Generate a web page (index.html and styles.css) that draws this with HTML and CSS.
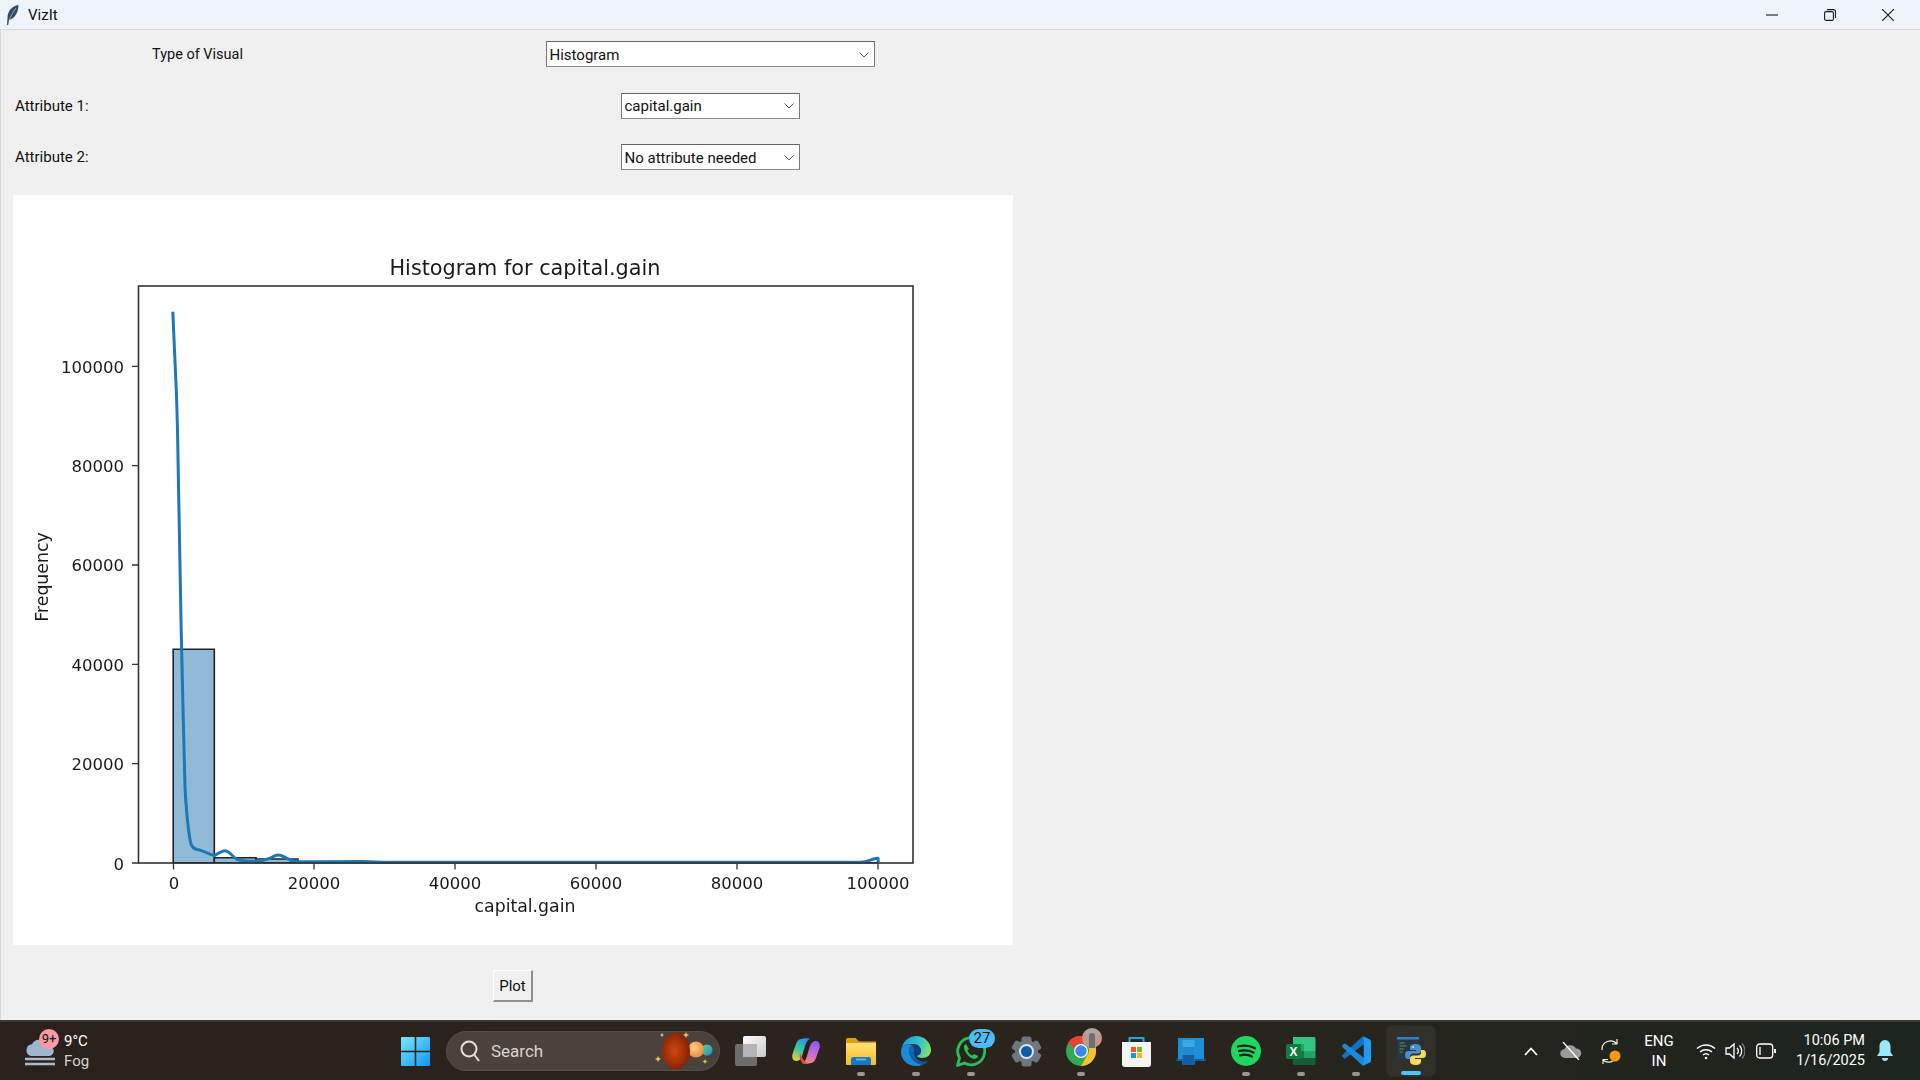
FILE: index.html
```html
<!DOCTYPE html>
<html lang="en">
<head>
    <meta charset="UTF-8">
    <title>VizIt</title>
    <link rel="stylesheet" href="styles.css">
</head>
<body>

<!-- Window title bar -->
<header class="titlebar">
    <svg class="app-feather" width="13" height="20" viewBox="0 0 13 20">
        <path d="M12.5 0C6 1 1.500 6 1.500 13L1 20h1.200l.8-5C9 13.500 12.500 7 12.500 0z" fill="#2f4a66"/>
        <path d="M10 3C7 7 5 11 3.200 15.500" stroke="#b9c9db" stroke-width=".7" fill="none"/>
    </svg>
    <span class="app-title">VizIt</span>
    <div class="window-controls">
        <button class="win-btn">
            <svg width="12" height="12" viewBox="0 0 12 12"><path d="M0 6h12" stroke="#1a1a1a" stroke-width="1.1"/></svg>
        </button>
        <button class="win-btn">
            <svg width="12" height="12" viewBox="0 0 12 12" fill="none" stroke="#1a1a1a" stroke-width="1.1"><rect x=".6" y="2.6" width="8.8" height="8.8" rx="1.5"/><path d="M3 .6h6.500a2 2 0 0 1 2 2V9"/></svg>
        </button>
        <button class="win-btn">
            <svg width="12" height="12" viewBox="0 0 12 12"><path d="M0 0l12 12M12 0L0 12" stroke="#1a1a1a" stroke-width="1.1"/></svg>
        </button>
    </div>
</header>

<main class="content">
    <div class="form-grid">
        <label class="label-center">Type of Visual</label>
        <div class="combo combo-wide">
            <span>Histogram</span>
            <svg width="10" height="6" viewBox="0 0 10 6"><path d="M.5.5L5 5 9.500.5" stroke="#555" fill="none"/></svg>
        </div>
        <label>Attribute 1:</label>
        <div class="combo">
            <span>capital.gain</span>
            <svg width="10" height="6" viewBox="0 0 10 6"><path d="M.5.5L5 5 9.500.5" stroke="#555" fill="none"/></svg>
        </div>
        <label>Attribute 2:</label>
        <div class="combo">
            <span>No attribute needed</span>
            <svg width="10" height="6" viewBox="0 0 10 6"><path d="M.5.5L5 5 9.500.5" stroke="#555" fill="none"/></svg>
        </div>
    </div>

    <div class="plot-area">
        <!-- viewBox follows screen pixels so the numbers can be read off the screenshot -->
        <svg class="chart" width="1000" height="750" viewBox="13 195 1000 750">
            <text class="chart-title" x="525" y="275" text-anchor="middle">Histogram for capital.gain</text>

            <path d="M173.2 862.7V649.3H214.3V862.7z" fill="#8fbbd9" stroke="#222" stroke-width="1.6"/>
            <path d="M214.3 862.7V857.7H256V862.7z" fill="#8fbbd9" stroke="#222" stroke-width="1.6"/>
            <path d="M256 862.7V859H298V862.7z" fill="#8fbbd9" stroke="#222" stroke-width="1.6"/>
            <path d="M298 862.7H878" stroke="#222" stroke-width="1.6"/>

            <path class="kde" d="M172.8 311.7L176.5 395 177.5 430 181 620 181.7 653 183.3 720 185 787C186 805 187 825 190.7 843C192 848 194 849 197 849.500C201 850 207 853 214.3 855.7C219 853 222 850.7 225 850.7C229 850.7 232 856 236.7 859.3C242 861 250 861.5 256.7 861C263 861 266 859.5 270 858.2C274 856 276 855 278.3 855C282 855 284 857 286.7 858.3C289 860 291 861.3 296 861.5L316.7 861.7 363 861.5 383 862.2H860C866 862 869 860.5 872 859.5C875 858.5 877 858 878 858.2L878.3 862"/>

            <rect class="spine" x="138.5" y="286" width="774.5" height="577"/>

            <g class="ticks">
                <path d="M173.5 863v6.500M314 863v6.500M455 863v6.500M596 863v6.500M737 863v6.500M878 863v6.500"/>
                <path d="M138.5 863h-6.500M138.5 763.7h-6.500M138.5 664.4h-6.500M138.5 565h-6.500M138.5 465.7h-6.500M138.5 366.4h-6.500"/>
            </g>

            <g class="tick-x" text-anchor="middle">
                <text x="174" y="889">0</text>
                <text x="314" y="889">20000</text>
                <text x="455" y="889">40000</text>
                <text x="596" y="889">60000</text>
                <text x="737" y="889">80000</text>
                <text x="878" y="889">100000</text>
            </g>
            <g class="tick-y" text-anchor="end">
                <text x="124" y="869.5">0</text>
                <text x="124" y="770">20000</text>
                <text x="124" y="670.7">40000</text>
                <text x="124" y="571.3">60000</text>
                <text x="124" y="472">80000</text>
                <text x="124" y="372.7">100000</text>
            </g>
            <text class="axis-label" x="525" y="912" text-anchor="middle">capital.gain</text>
            <text class="axis-label" text-anchor="middle" transform="translate(48 577) rotate(-90)">Frequency</text>
        </svg>
        <button class="plot-btn">Plot</button>
    </div>
</main>

<!-- Windows taskbar -->
<footer class="taskbar">
    <div class="weather">
        <svg width="32" height="32" viewBox="0 0 32 32">
            <circle cx="19" cy="11" r="8" fill="#7d93ad"/>
            <path d="M6 21a6 6 0 0 1 1-11.800A8 8 0 0 1 22 11a5 5 0 0 1 3 10z" fill="#9db5d0"/>
            <path d="M0 24h30M0 29h30" stroke="#aebccb" stroke-width="2.5"/>
        </svg>
        <span class="weather-badge">9+</span>
        <div class="weather-text">
            <span class="temp">9°C</span>
            <span>Fog</span>
        </div>
    </div>

    <div class="task-center">
        <div class="app">
            <svg width="29" height="29" viewBox="0 0 29 29">
                <defs><linearGradient id="winGrad" x1="0" y1="0" x2="1" y2="1"><stop offset="0" stop-color="#7be6fb"/><stop offset="1" stop-color="#0f95f5"/></linearGradient></defs>
                <path d="M0 1a1 1 0 0 1 1-1h12.700v13.700H0zM15.300 0H28a1 1 0 0 1 1 1v12.700H15.300zM0 15.300h13.700V29H1a1 1 0 0 1-1-1zM15.300 15.300H29V28a1 1 0 0 1-1 1H15.300z" fill="url(#winGrad)"/>
            </svg>
        </div>

        <div class="search-box">
            <svg width="20" height="22" viewBox="0 0 20 22" fill="none" stroke="#e4e1de" stroke-width="2"><circle cx="9" cy="9" r="7.5"/><path d="M14.500 15l4.500 6"/></svg>
            <span>Search</span>
            <svg class="planets" width="66" height="44" viewBox="0 0 66 44">
                <defs>
                    <radialGradient id="redPlanet" cx=".45" cy=".5" r=".6"><stop offset="0" stop-color="#d2460f"/><stop offset="1" stop-color="#7a1e08"/></radialGradient>
                    <radialGradient id="orangePlanet" cx=".4" cy=".4" r=".7"><stop offset="0" stop-color="#ffd08a"/><stop offset="1" stop-color="#e4852f"/></radialGradient>
                    <linearGradient id="tealPlanet" x1="0" y1="0" x2="1" y2="1"><stop offset="0" stop-color="#5fd08c"/><stop offset="1" stop-color="#1f8fc9"/></linearGradient>
                </defs>
                <circle cx="57" cy="21" r="5.5" fill="url(#tealPlanet)"/>
                <circle cx="46" cy="20.500" r="8" fill="url(#orangePlanet)"/>
                <ellipse cx="26" cy="22" rx="14" ry="18.5" fill="url(#redPlanet)"/>
                <path d="M8 27l1 2 2 1-2 1-1 2-1-2-2-1 2-1zM36 3l1 2 2 1-2 1-1 2-1-2-2-1 2-1zM55 30l.8 1.700 1.700.8-1.700.8-.8 1.700-.8-1.700-1.700-.8 1.700-.8zM12 4l.7 1.300 1.300.7-1.300.7-.7 1.300-.7-1.300-1.300-.7 1.300-.7z" fill="#f2c14a"/>
            </svg>
        </div>

        <!-- task view -->
        <div class="app">
            <svg width="32" height="30" viewBox="0 0 32 30">
                <defs><linearGradient id="tvFront" x1="0" y1="0" x2="1" y2="1"><stop offset="0" stop-color="#fff"/><stop offset="1" stop-color="#c9c9c9"/></linearGradient></defs>
                <rect x="0" y="8" width="22" height="22" rx="2" fill="#6d6d6d"/>
                <rect x="8" y="0" width="23" height="21" rx="2" fill="url(#tvFront)"/>
                <rect x="8" y="8" width="14" height="13" fill="#b5b5b5"/>
            </svg>
        </div>

        <!-- copilot -->
        <div class="app">
            <svg width="28" height="26" viewBox="0 0 28 26">
                <defs>
                    <linearGradient id="copA" x1=".7" y1="0" x2=".2" y2="1"><stop offset="0" stop-color="#2a8df0"/><stop offset=".5" stop-color="#37c7a0"/><stop offset="1" stop-color="#e6d13a"/></linearGradient>
                    <linearGradient id="copB" x1=".6" y1="0" x2=".4" y2="1"><stop offset="0" stop-color="#8c5be8"/><stop offset=".55" stop-color="#c96ad8"/><stop offset="1" stop-color="#f58a6e"/></linearGradient>
                </defs>
                <path d="M9 1C11 0 17 0 18 1 15 2 14 5 13 8L10 18C9 21 7 23 4 23 1 23-.5 20 .5 16L4 6C5 3 6.500 1.500 9 1z" fill="url(#copA)"/>
                <path d="M19 25C17 26 11 26 10 25 13 24 14 21 15 18L18 8C19 5 21 3 24 3 27 3 28.500 6 27.500 10L24 20C23 23 21.500 24.500 19 25z" fill="url(#copB)"/>
                <path d="M8 15C10 20 12 24 16 25L11 25.500C9 24 7 20 8 15z" fill="#e8483a"/>
                <path d="M15.500 6h2.500L13 20h-2.500z" fill="#2a1d1f"/>
            </svg>
        </div>

        <!-- file explorer -->
        <div class="app running">
            <svg width="30" height="27" viewBox="0 0 30 27">
                <defs><linearGradient id="folder" x1="0" y1="0" x2="0" y2="1"><stop offset="0" stop-color="#ffe27a"/><stop offset="1" stop-color="#fcb919"/></linearGradient></defs>
                <path d="M0 1.500A1.500 1.500 0 0 1 1.500 0h8L13 3.500h17V10H0z" fill="#e0a10f"/>
                <rect x="0" y="5" width="30" height="22" rx="1" fill="url(#folder)"/>
                <path d="M5 27v-6a2 2 0 0 1 2-2h16a2 2 0 0 1 2 2v6z" fill="#1677c9"/>
                <path d="M10 21.500h10" stroke="#58b4ee" stroke-width="2"/>
            </svg>
        </div>

        <!-- edge -->
        <div class="app running">
            <svg width="30" height="30" viewBox="0 0 30 30">
                <defs>
                    <linearGradient id="edgeTop" x1="0" y1=".3" x2="1" y2=".6"><stop offset="0" stop-color="#1c9be0"/><stop offset=".55" stop-color="#35c1c8"/><stop offset="1" stop-color="#86e06a"/></linearGradient>
                    <linearGradient id="edgeLow" x1="0" y1="0" x2="1" y2="1"><stop offset="0" stop-color="#0f6cbd"/><stop offset="1" stop-color="#0c4f9e"/></linearGradient>
                </defs>
                <path d="M1 11C3 4 9 0 15 0C24 0 30 7 30 14C30 19 26 22 21 22C18 22 16 21 15.500 19.500C18 19.500 20 17.500 20 15C20 11 17 8 12 8C7 8 3 9 1 11z" fill="url(#edgeTop)"/>
                <path d="M1 11C3 9 7 8.500 11 9C8 11 7.500 14 8.500 17.500C10 23 15 28 22 28.700C20 29.600 17.500 30 15 30C7 30 0 24 0 16C0 14 .5 12.500 1 11z" fill="#1b8ad8"/>
                <path d="M11 9C8 11 7.500 14 8.500 17.500C10 23 15 28 22 28.700C24 28 26 26.500 27 25C25 26 22 26 19.500 25C15 23.500 13 20 13.500 16.500C14 13 13 11 11 9z" fill="url(#edgeLow)"/>
                <path d="M11 8.500C16 8 20 11 20 15C20 17.500 18 19.500 15.500 19.500C13.500 19 13 17.500 13.500 16C14 13 13 11 11 8.500z" fill="#0b3f80"/>
            </svg>
        </div>

        <!-- whatsapp -->
        <div class="app running">
            <svg width="30" height="31" viewBox="0 0 30 31">
                <path d="M1.500 29.500l2-7.500A13.500 13.500 0 1 1 8.500 27z" fill="none" stroke="#22c15e" stroke-width="2.8" stroke-linejoin="round"/>
                <path d="M10 8c-2 1-3 3-1 7s5 7 9 8c2 0 4-1 4-3l-4-2-2 1.500c-2-1-4-3-4.500-5L13 13z" fill="#22c15e"/>
            </svg>
            <span class="count-badge">27</span>
        </div>

        <!-- settings -->
        <div class="app">
            <svg width="31" height="31" viewBox="-15.500 -15.500 31 31">
                <g fill="#6d7782">
                    <circle r="11.500"/>
                    <rect x="-5" y="-15" width="10" height="8" rx="2.500"/>
                    <rect x="-5" y="-15" width="10" height="8" rx="2.500" transform="rotate(60)"/>
                    <rect x="-5" y="-15" width="10" height="8" rx="2.500" transform="rotate(120)"/>
                    <rect x="-5" y="-15" width="10" height="8" rx="2.500" transform="rotate(180)"/>
                    <rect x="-5" y="-15" width="10" height="8" rx="2.500" transform="rotate(240)"/>
                    <rect x="-5" y="-15" width="10" height="8" rx="2.500" transform="rotate(300)"/>
                </g>
                <circle r="7.500" fill="#dfe4e9"/>
                <circle r="5.500" fill="#0f5ba6"/>
            </svg>
        </div>

        <!-- chrome -->
        <div class="app running">
            <svg width="30" height="30" viewBox="0 0 30 30">
                <circle cx="15" cy="15" r="15" fill="#35a853"/>
                <path d="M15 0a15 15 0 0 1 13 7.500H15a7.500 7.500 0 0 0-7 5L2 6.500A15 15 0 0 1 15 0z" fill="#e94335"/>
                <path d="M28 7.500a15 15 0 0 1-13 22.500l6.500-11.300A7.500 7.500 0 0 0 21 9z" fill="#fbc02d"/>
                <circle cx="15" cy="15" r="7" fill="#fff"/>
                <circle cx="15" cy="15" r="5.700" fill="#3f85f2"/>
            </svg>
            <svg class="chrome-avatar" width="20" height="20" viewBox="0 0 20 20">
                <circle cx="10" cy="10" r="10" fill="#c4958e"/>
                <path d="M2 5a10 10 0 0 1 16 0l-4 4H6z" fill="#b0a49c"/>
                <path d="M7 20V8a3 3 0 0 1 6 0v12z" fill="#6f6f78"/>
            </svg>
        </div>

        <!-- store -->
        <div class="app">
            <svg width="29" height="31" viewBox="0 0 29 31">
                <path d="M7.500 6V2h14v4" fill="none" stroke="#19a7e0" stroke-width="2"/>
                <path d="M0 6h29v22a3 3 0 0 1-3 3H3a3 3 0 0 1-3-3z" fill="#f4f4f4"/>
                <rect x="9" y="11" width="5" height="5" fill="#f0562c"/>
                <rect x="15" y="11" width="5" height="5" fill="#7cb82f"/>
                <rect x="9" y="17" width="5" height="5" fill="#0f9be3"/>
                <rect x="15" y="17" width="5" height="5" fill="#fbb80c"/>
            </svg>
        </div>

        <!-- phone link -->
        <div class="app">
            <svg width="30" height="27" viewBox="0 0 30 27">
                <rect x="2" y="0" width="26" height="21" fill="#1d8fd6"/>
                <path d="M0 21h30l-1 2H1z" fill="#0f5ea8"/>
                <rect x="6.500" y="2" width="12" height="25" rx="1" fill="#3ba8e6"/>
                <path d="M6.500 17h12v9a1 1 0 0 1-1 1h-10a1 1 0 0 1-1-1z" fill="#125ea6"/>
                <rect x="6.500" y="9" width="12" height="8" fill="#2188cf"/>
            </svg>
        </div>

        <!-- spotify -->
        <div class="app running">
            <svg width="30" height="30" viewBox="0 0 30 30">
                <circle cx="15" cy="15" r="15" fill="#1ed760"/>
                <path d="M7 10.500c6-1.500 12-1 17 1.700M8 15c5-1.200 10-.8 14.500 1.500M9 19.300c4-1 8.500-.6 12 1.300" fill="none" stroke="#1c1c1c" stroke-width="2.3" stroke-linecap="round"/>
            </svg>
        </div>

        <!-- excel -->
        <div class="app running">
            <svg width="30" height="28" viewBox="0 0 30 28">
                <path d="M7 0h21a1.500 1.500 0 0 1 1.500 1.500V7H7z" fill="#33c481"/>
                <rect x="7" y="7" width="11" height="7" fill="#21a366"/>
                <rect x="18" y="7" width="11.5" height="7" fill="#33c481"/>
                <rect x="7" y="14" width="11" height="7" fill="#107c41"/>
                <rect x="18" y="14" width="11.5" height="7" fill="#21a366"/>
                <path d="M7 21h22.500v5.500A1.500 1.500 0 0 1 28 28H8.500A1.500 1.500 0 0 1 7 26.500z" fill="#185c37"/>
                <rect x="0" y="7" width="15" height="15" rx="1.5" fill="#0f7b3f"/>
                <text class="excel-x" x="7.5" y="19" text-anchor="middle">X</text>
            </svg>
        </div>

        <!-- vs code -->
        <div class="app running">
            <svg width="29" height="30" viewBox="0 0 100 100">
                <path d="M96.500 10.800L75.900.9c-2.400-1.200-5.200-.7-7.100 1.200L1.400 63.500c-1.800 1.700-1.800 4.500 0 6.200l5.500 5c1.500 1.300 3.700 1.400 5.300.2L93.400 13.300c2.700-2.100 6.600-.1 6.600 3.300v-.2c0-2.400-1.400-4.600-3.500-5.600z" fill="#0f74c4"/>
                <path d="M96.500 89.200L75.900 99.100c-2.400 1.200-5.200.7-7.100-1.200L1.400 36.500c-1.800-1.700-1.800-4.500 0-6.200l5.500-5c1.500-1.300 3.700-1.400 5.300-.2L93.400 86.700c2.700 2.100 6.600.1 6.600-3.300v.2c0 2.400-1.400 4.600-3.500 5.600z" fill="#1a8ad4"/>
                <path d="M75.900 99.100c-2.400 1.200-5.200.7-7.100-1.200 2.300 2.300 6.200.7 6.200-2.600V4.700c0-3.300-3.900-4.900-6.200-2.600 1.900-1.900 4.700-2.400 7.100-1.200L96.500 10.800C98.600 11.800 100 14 100 16.400v67.200c0 2.400-1.400 4.600-3.500 5.600z" fill="#1f9cf0"/>
            </svg>
        </div>

        <!-- python idle, active window -->
        <div class="app active">
            <svg width="29" height="28" viewBox="0 0 29 28">
                <rect x="0" y="0" width="22" height="24" fill="#2b3442"/>
                <rect x="0" y="0" width="22" height="2.5" fill="#2d84cc"/>
                <path d="M2.500 6h5M2.500 9h7M2.500 12h4M2.500 15h3" stroke="#4f9a5c" stroke-width="1.2"/>
                <g transform="translate(8 7)">
                    <path d="M10.500 0C6.500 0 5 1.500 5 3.500V6h6v1H3C1 7 0 8.500 0 11s1 4 3 4h2v-2.500C5 10.500 6.500 9.500 8 9.500h5c1.500 0 3-1 3-3V3.500C16 1.500 14 0 10.500 0z" fill="#4a8fc9"/>
                    <path d="M10.500 21C14.500 21 16 19.500 16 17.500V15h-6v-1h8c2 0 3-1.500 3-4s-1-4-3-4h-2v2.500C16 10.500 14.500 11.500 13 11.500H8c-1.500 0-3 1-3 3v3C5 19.500 7 21 10.500 21z" fill="#f7d95c"/>
                    <circle cx="8" cy="3" r=".9" fill="#dfeaf5"/>
                    <circle cx="13" cy="18" r=".9" fill="#fff6cf"/>
                </g>
            </svg>
        </div>
    </div>

    <div class="tray">
        <div class="tray-icon">
            <svg width="14" height="9" viewBox="0 0 14 9"><path d="M1 8l6-6.500L13 8" fill="none" stroke="#fff" stroke-width="1.8"/></svg>
        </div>
        <div class="tray-icon">
            <svg width="22" height="18" viewBox="0 0 22 18">
                <path d="M5 16a4.500 4.500 0 0 1-.5-9A6.500 6.500 0 0 1 16 6.500a4.700 4.700 0 0 1 1 9.500z" fill="#9b9b9b"/>
                <path d="M3 0l16 18" stroke="#fff" stroke-width="1.3"/>
            </svg>
        </div>
        <div class="tray-icon">
            <svg width="22" height="26" viewBox="0 0 22 26">
                <path d="M2 12a8.500 8.500 0 0 1 15-6M17 1v5h-5M17 17a8.500 8.500 0 0 1-14 5M3 26v-4.500h5" fill="none" stroke="#f2f2f2" stroke-width="1.2"/>
                <circle cx="15" cy="18" r="5.5" fill="#f39a12"/>
            </svg>
        </div>
        <div class="lang">ENG<br>IN</div>
        <div class="tray-quick">
            <svg width="20" height="18" viewBox="0 0 20 18" fill="none" stroke="#fff" stroke-width="1.5">
                <path d="M1 6.500a13 13 0 0 1 18 0M4 10a9 9 0 0 1 12 0M7 13a4.500 4.500 0 0 1 6 0"/>
                <circle cx="10" cy="16" r="1.3" fill="#fff" stroke="none"/>
            </svg>
            <svg width="20" height="18" viewBox="0 0 20 18" fill="none" stroke="#fff" stroke-width="1.3">
                <path d="M1 6h3.500L9 2v14l-4.500-4H1z"/>
                <path d="M12 6a4 4 0 0 1 0 6M14.500 3.500a8 8 0 0 1 0 11"/>
                <path d="M17 1.500a11 11 0 0 1 0 15" stroke="#777"/>
            </svg>
            <svg class="battery" width="20" height="16" viewBox="0 0 20 16" fill="none" stroke="#fff" stroke-width="1.3">
                <rect x=".7" y="1" width="16" height="14" rx="3"/>
                <path d="M19 6v4" stroke-width="2"/>
                <path d="M4 4v8"/>
            </svg>
        </div>
        <div class="clock">10:06 PM<br>1/16/2025</div>
        <svg class="bell" width="16" height="22" viewBox="0 0 16 22">
            <path d="M8 0c3.500 0 5.500 3 5.500 6.500V12L16 16H0l2.500-4V6.500C2.500 3 4.500 0 8 0z" fill="#98e7fb"/>
            <path d="M5 18a3 3 0 0 0 6 0z" fill="#98e7fb"/>
        </svg>
    </div>
</footer>

</body>
</html>
```

FILE: styles.css
```css
html, body {
    margin: 0;
    height: 100%;
}
body {
    width: 1920px;
    height: 1080px;
    overflow: hidden;
    display: flex;
    flex-direction: column;
    background-color: #f0f0f0;
    font-family: "Roboto", "Liberation Sans", sans-serif;
    color: #111;
}

/* Title bar */
.titlebar {
    height: 29px;
    flex: none;
    display: flex;
    align-items: center;
    padding-left: 6px;
    background-color: #eff4fb;
    border-bottom: 1px solid #d6d8db;
}
.app-feather {
    margin-right: 9px;
}
.app-title {
    font-size: 15px;
}
.window-controls {
    margin-left: auto;
    margin-right: 3px;
    display: flex;
}
.win-btn {
    width: 58px;
    height: 29px;
    display: flex;
    align-items: center;
    justify-content: center;
    padding: 0;
    border: none;
    background: none;
}

/* Form */
.content {
    flex: 1;
    padding: 11px 0 0 12px;
    border-left: 1px solid #d9d9d9;
    box-sizing: border-box;
    min-height: 0;
}
.form-grid {
    display: grid;
    grid-template-columns: 367px 660px;
    grid-auto-rows: 26px;
    row-gap: 25.5px;
    align-items: center;
    font-size: 15px;
}
.form-grid label {
    padding-left: 2px;
}
.form-grid .label-center {
    justify-self: center;
    font-size: 14.5px;
    padding-top: 1px;
}
.combo {
    width: 179px;
    height: 26px;
    box-sizing: border-box;
    justify-self: center;
    display: flex;
    align-items: center;
    justify-content: space-between;
    padding: 1px 5px 0 3px;
    background-color: white;
    border: 1px solid #7a7a7a;
    border-top-color: #666;
    border-bottom-color: #8a8a8a;
    font-size: 15px;
}
.combo-wide {
    width: 329px;
}

/* Plot */
.plot-area {
    width: 1000px;
    margin-top: 25px;
    display: flex;
    flex-direction: column;
    align-items: center;
}
.chart {
    display: block;
    background-color: white;
    filter: blur(0.35px);
}
.chart text {
    font-family: "DejaVu Sans", sans-serif;
    fill: #1a1a1a;
}
.chart .chart-title {
    font-size: 20.8px;
}
.tick-x, .tick-y {
    font-size: 16.5px;
}
.chart .axis-label {
    font-size: 17.3px;
}
.kde {
    fill: none;
    stroke: #1f77b4;
    stroke-width: 3;
    stroke-linejoin: round;
}
.spine {
    fill: none;
    stroke: #333;
    stroke-width: 1.6;
}
.ticks path {
    fill: none;
    stroke: #333;
    stroke-width: 1.3;
}
.plot-btn {
    width: 40px;
    height: 32px;
    margin-top: 25px;
    padding: 0;
    background-color: #f0f0f0;
    border: 1px solid white;
    border-right: 2px solid #8f8f8f;
    border-bottom: 2px solid #8f8f8f;
    font-family: "Roboto", sans-serif;
    font-size: 15px;
    color: #111;
}

/* Taskbar */
.taskbar {
    height: 60px;
    flex: none;
    display: flex;
    align-items: center;
    box-sizing: border-box;
    padding-right: 27px;
    color: white;
    background: linear-gradient(90deg, #2a211c 0%, #2b241d 55%, #1c241e 100%);
    border-top: 2px solid #3b3835;
}
.weather {
    position: relative;
    flex: 0 0 391px;
    box-sizing: border-box;
    padding-left: 25px;
    display: flex;
    align-items: center;
    gap: 7px;
}
.weather-badge {
    position: absolute;
    left: 39px;
    top: -2px;
    width: 20px;
    height: 20px;
    border-radius: 50%;
    background-color: #f99aa6;
    color: #111;
    font-size: 13px;
    line-height: 20px;
    text-align: center;
}
.weather-text {
    display: flex;
    flex-direction: column;
    font-size: 15px;
    line-height: 20px;
    color: #d5d3d1;
}
.temp {
    color: white;
}
.task-center {
    display: flex;
    align-items: center;
    gap: 7px;
}
.app {
    position: relative;
    width: 48px;
    height: 50px;
    display: flex;
    align-items: center;
    justify-content: center;
}
.running::after {
    content: "";
    position: absolute;
    left: 20px;
    bottom: 0;
    width: 8px;
    height: 4px;
    border-radius: 2px;
    background-color: #9a9793;
}
.active {
    background-color: rgba(255, 255, 255, 0.06);
    box-shadow: 0 0 0 1px rgba(255, 255, 255, 0.03);
    border-radius: 5px;
}
.active::after {
    content: "";
    position: absolute;
    left: 14px;
    bottom: 1px;
    width: 20px;
    height: 4px;
    border-radius: 2px;
    background-color: #4fc3f7;
}
.search-box {
    width: 274px;
    height: 40px;
    box-sizing: border-box;
    padding: 0 3px 0 13px;
    display: flex;
    align-items: center;
    gap: 11px;
    background-color: #4a423c;
    border: 1px solid #57504a;
    border-radius: 20px;
    color: #d8d4d0;
    font-size: 17px;
}
.planets {
    margin-left: auto;
}
.count-badge {
    position: absolute;
    left: 22px;
    top: 3px;
    width: 26px;
    height: 19px;
    border-radius: 10px;
    background-color: #4bbdf5;
    color: #111;
    font-size: 15px;
    line-height: 19px;
    text-align: center;
}
.chrome-avatar {
    position: absolute;
    left: 25px;
    top: 2px;
}
.excel-x {
    font-family: "Liberation Sans", sans-serif;
    font-size: 12px;
    font-weight: bold;
    fill: white;
}
.tray {
    margin-left: auto;
    display: flex;
    align-items: center;
}
.tray-icon {
    width: 40px;
    display: flex;
    justify-content: center;
}
.lang {
    width: 54px;
    margin-left: 1px;
    font-size: 15px;
    line-height: 20px;
    text-align: center;
}
.tray-quick {
    margin-left: 10px;
    display: flex;
    align-items: center;
    gap: 9px;
}
.battery {
    margin-left: 2px;
}
.clock {
    width: 89px;
    font-size: 14.5px;
    line-height: 20px;
    text-align: right;
}
.bell {
    margin-left: 12px;
}
```
